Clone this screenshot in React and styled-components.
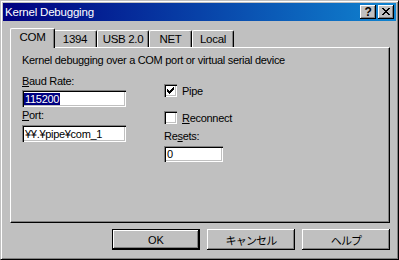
import React from 'react';
import styled, { createGlobalStyle } from 'styled-components';

const Global = createGlobalStyle`
  html, body { margin: 0; padding: 0; background: #c0c0c0; }
  body {
    font-family: "Liberation Sans", Arial, "Noto Sans CJK JP", sans-serif;
    font-size: 11px;
    letter-spacing: -0.3px;
    color: #000;
  }
  * { box-sizing: border-box; }
`;

const Window = styled.div`
  width: 399px;
  height: 260px;
  background: #c0c0c0;
  border: 1px solid;
  border-color: #c0c0c0 #000 #000 #c0c0c0;
  box-shadow: inset 1px 1px #fff, inset -1px -1px #808080;
  padding: 2px;
  display: flex;
  flex-direction: column;
`;

const TitleBar = styled.div`
  height: 18px;
  flex: none;
  background: linear-gradient(to right, #000080, #1084d0);
  color: #fff;
  display: flex;
  align-items: center;
  padding: 0 2px 0 2px;
  font-size: 12px;
`;

const TitleText = styled.div`
  flex: 1;
  letter-spacing: -0.2px;
  font-size: 11.5px;
`;

const TitleButton = styled.div`
  width: 16px;
  height: 14px;
  background: #c0c0c0;
  margin-left: ${p => (p.$gap ? '2px' : '0')};
  box-shadow: inset -1px -1px #000, inset 1px 1px #fff, inset -2px -2px #808080;
  display: flex;
  align-items: center;
  justify-content: center;
  color: #000;
  font-weight: bold;
  font-size: 12px;
  line-height: 1;
  padding-bottom: 1px;
`;

const Body = styled.div`
  flex: 1;
  display: flex;
  flex-direction: column;
  padding: 7px 6px 7px 7px;
`;

const TabStrip = styled.div`
  display: flex;
  align-items: flex-end;
  padding-left: 2px;
  height: 20px;
  margin-bottom: -1px;
  position: relative;
  z-index: 1;
`;

const Tab = styled.div`
  flex: none;
  width: ${p => p.$w}px;
  height: ${p => (p.$active ? 20 : 17)}px;
  margin: ${p => (p.$active ? '0 -2px 0 -2px' : '0 0 1px 0')};
  padding-bottom: ${p => (p.$active ? '3px' : '0')};
  position: relative;
  z-index: ${p => (p.$active ? 2 : 1)};
  background: #c0c0c0;
  border-top: 1px solid #fff;
  border-left: 1px solid #fff;
  border-right: 1px solid #000;
  box-shadow: inset -1px 0 #808080;
  border-top-left-radius: 2px;
  border-top-right-radius: 2px;
  display: flex;
  align-items: center;
  justify-content: center;
  font-size: 11.5px;
  white-space: nowrap;
`;

const Panel = styled.div`
  flex: 1;
  border: 1px solid;
  border-color: #fff #000 #000 #fff;
  box-shadow: inset -1px -1px #808080;
  padding: 6px 11px 0 11px;
  display: flex;
  flex-direction: column;
`;

const Description = styled.div`
  line-height: 13px;
  height: 13px;
`;

const Columns = styled.div`
  display: grid;
  grid-template-columns: 142px 1fr;
  margin-top: 8px;
`;

const Column = styled.div`
  display: flex;
  flex-direction: column;
`;

const Label = styled.div`
  line-height: 13px;
  height: 13px;
  margin-top: ${p => p.$mt || 0}px;
`;

const Field = styled.div`
  width: ${p => p.$w}px;
  height: ${p => p.$h}px;
  margin-top: ${p => p.$mt || 0}px;
  background: #fff;
  box-shadow: inset 1px 1px #808080, inset 2px 2px #000, inset -1px -1px #fff, inset -2px -2px #c0c0c0;
  padding: 0 3px;
  display: flex;
  align-items: center;
  white-space: nowrap;
  font-size: 11px;
`;

const Selected = styled.span`
  background: #000080;
  color: #fff;
  line-height: 12px;
  padding: 0 1px;
  margin-left: -1px;
`;

const CheckRow = styled.div`
  display: flex;
  align-items: center;
  gap: 5px;
  height: 13px;
  margin-top: ${p => p.$mt || 0}px;
`;

const Box = styled.div`
  width: 13px;
  height: 13px;
  background: #fff;
  box-shadow: inset 1px 1px #808080, inset 2px 2px #000, inset -1px -1px #fff, inset -2px -2px #c0c0c0;
  display: flex;
  align-items: center;
  justify-content: center;
`;

const U = styled.span`
  text-decoration: underline;
  text-underline-offset: 1px;
`;

const ButtonRow = styled.div`
  display: flex;
  justify-content: flex-end;
  gap: 7px;
  margin-top: 6px;
`;

const Button = styled.div`
  width: 88px;
  height: 21px;
  background: #c0c0c0;
  display: flex;
  align-items: center;
  justify-content: center;
  font-size: 11px;
  letter-spacing: ${p => (p.$cjk ? '-0.8px' : '0')};
  border: ${p => (p.$default ? '1px solid #000' : 'none')};
  box-shadow: inset -1px -1px #000, inset 1px 1px #fff, inset -2px -2px #808080;
`;

const Check = () => (
  <svg width="7" height="7" viewBox="0 0 7 7">
    <path d="M0 2h1v1h1v1h1v-1h1v-1h1v-1h1v-1h1v3h-1v1h-1v1h-1v1h-1v1h-1v-1h-1v-1h-1z" fill="#000" />
  </svg>
);

const CloseGlyph = () => (
  <svg width="8" height="7" viewBox="0 0 8 7">
    <path d="M0 0h2v1h1v1h2v-1h1v-1h2v1h-1v1h-1v1h-1v1h1v1h1v1h1v1h-2v-1h-1v-1h-2v1h-1v1h-2v-1h1v-1h1v-1h1v-1h-1v-1h-1v-1h-1z" fill="#000" />
  </svg>
);

const tabs = [
  { label: 'COM', w: 45, active: true },
  { label: '1394', w: 44 },
  { label: 'USB 2.0', w: 52 },
  { label: 'NET', w: 43 },
  { label: 'Local', w: 42 },
];

export default function App() {
  return (
    <>
      <Global />
      <Window>
        <TitleBar>
          <TitleText>Kernel Debugging</TitleText>
          <TitleButton>?</TitleButton>
          <TitleButton $gap><CloseGlyph /></TitleButton>
        </TitleBar>
        <Body>
          <TabStrip>
            {tabs.map(t => (
              <Tab key={t.label} $w={t.w} $active={t.active}>{t.label}</Tab>
            ))}
          </TabStrip>
          <Panel>
            <Description>Kernel debugging over a COM port or virtual serial device</Description>
            <Columns>
              <Column>
                <Label><U>B</U>aud Rate:</Label>
                <Field $w={104} $h={17} $mt={2}><Selected>115200</Selected></Field>
                <Label $mt={2}><U>P</U>ort:</Label>
                <Field $w={104} $h={17} $mt={3}>¥¥.¥pipe¥com_1</Field>
              </Column>
              <Column>
                <CheckRow $mt={9}><Box><Check /></Box>Pipe</CheckRow>
                <CheckRow $mt={14}><Box /><span><U>R</U>econnect</span></CheckRow>
                <Label $mt={6}>Re<U>s</U>ets:</Label>
                <Field $w={59} $h={16} $mt={3}>0</Field>
              </Column>
            </Columns>
          </Panel>
          <ButtonRow>
            <Button $default>OK</Button>
            <Button $cjk>キャンセル</Button>
            <Button $cjk>ヘルプ</Button>
          </ButtonRow>
        </Body>
      </Window>
    </>
  );
}
